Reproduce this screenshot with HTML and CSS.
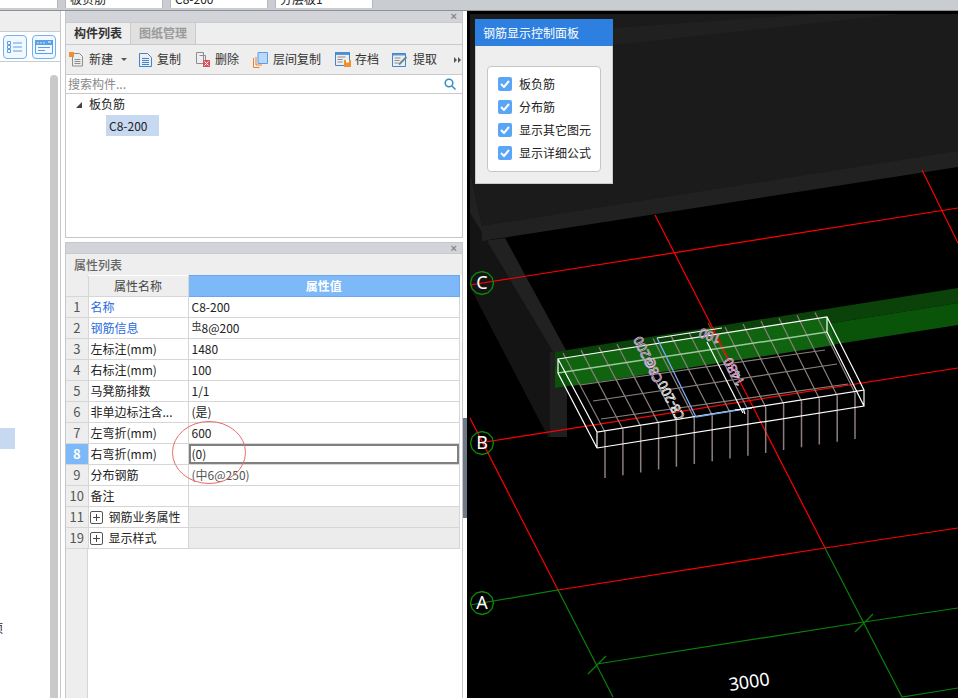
FILE: index.html
```html
<!DOCTYPE html>
<html lang="zh-CN">
<head>
<meta charset="utf-8">
<title>钢筋显示控制面板</title>
<link rel="stylesheet" href="styles.css">
</head>
<body>
<div class="app">
  <div class="topbar">
    <div class="field field-first"></div>
    <div class="field"><span>板负筋</span></div>
    <div class="field"><span>C8-200</span></div>
    <div class="field"><span>分层板1</span></div>
  </div>
  <div class="main">
    <aside class="left">
      <div class="left-head"></div>
      <div class="left-tools">
        <button class="view-btn"><svg width="16" height="14" viewBox="0 0 16 14"><path class="ic-blue" d="M0.5 1.5h3v3h-3zM0.5 5.5h3v3h-3zM0.5 9.5h3v3h-3z"/><path class="ic-blue" d="M6 3h9M6 7h9M6 11h9"/></svg></button>
        <button class="view-btn"><svg width="18" height="14" viewBox="0 0 18 14"><path class="ic-fill" d="M0 0h18v5H0z"/><path class="ic-blue" d="M.5.5h17v13H.5zM3 7.5h12M3 10.500h7"/><path class="ic-white" d="M3 2v1.500M6 2v1.500M9 2v1.500M13 2h3"/></svg></button>
      </div>
      <div class="left-body">
        <div class="left-list">
          <div class="left-sel"></div>
          <div class="left-clip"><span>项</span></div>
        </div>
        <div class="left-scroll"></div>
      </div>
    </aside>
    <section class="center">
      <div class="dock-top">
        <div class="dock-bar"><span class="dock-x">×</span></div>
        <div class="tabs">
          <div class="tab tab-on">构件列表</div>
          <div class="tab tab-off">图纸管理</div>
        </div>
        <div class="tools">
          <div class="tool tool-new">
            <svg width="15" height="15" viewBox="0 0 15 15"><path class="ic-doc" d="M3.500 1.500h7l3 3v9.500h-10z"/><path class="ic-doc" d="M5.500 7.500h6M5.500 9.500h6M5.500 11.500h6"/><path class="ic-orange" d="M0 0h5v5H0z"/></svg>
            <span>新建</span><i class="caret"></i>
          </div>
          <div class="tool tool-copy">
            <svg width="13" height="15" viewBox="0 0 13 15"><path class="ic-blue2" d="M.5 1.500h8l4 4v9h-12z"/><path class="ic-blue2" d="M3 6.500h7M3 8.500h7M3 10.500h7M3 12.500h7"/></svg>
            <span>复制</span>
          </div>
          <div class="tool tool-del">
            <svg width="14" height="15" viewBox="0 0 14 15"><path class="ic-doc" d="M.5.500h7v11h-7z"/><path class="ic-doc" d="M3.500 3.500h6v9"/><path class="ic-red" d="M7 8h7v7H7z"/><path class="ic-white" d="M8.500 9.500l4 4M12.500 9.500l-4 4"/></svg>
            <span>删除</span>
          </div>
          <div class="tool tool-floor">
            <svg width="15" height="16" viewBox="0 0 15 16"><path class="ic-orange-line" d="M.5 6v9.500h6M3 5v8h6"/><path class="ic-sky" d="M5 .500h9.500v11H5z"/></svg>
            <span>层间复制</span>
          </div>
          <div class="tool tool-save">
            <svg width="16" height="15" viewBox="0 0 16 15"><path class="ic-fill2" d="M0 0h15v3H0z"/><path class="ic-blue2" d="M.5 1h14v12.500H.5z"/><path class="ic-doc" d="M2.500 5h8M2.500 7.500h5M2.500 10h5"/><path class="ic-orange" d="M9 8h7v7H9z"/><path class="ic-whitefill" d="M11 8h3v2.500h-3z"/></svg>
            <span>存档</span>
          </div>
          <div class="tool tool-take">
            <svg width="16" height="15" viewBox="0 0 16 15"><path class="ic-fill2" d="M0 1h13v2.500H0z"/><path class="ic-blue2" d="M.5 1.500h13v13H.5z"/><path class="ic-doc" d="M2.500 6h6M2.500 8.500h5M2.500 11h4"/><path class="ic-pen" d="M7 12.500L14.500 5"/></svg>
            <span>提取</span>
          </div>
          <div class="tool-more"><i></i><i></i></div>
        </div>
        <div class="search">
          <span>搜索构件...</span>
          <svg width="12" height="12" viewBox="0 0 12 12"><circle class="ic-search" cx="5" cy="5" r="3.800"/><path class="ic-search" d="M8 8l3.500 3.500"/></svg>
        </div>
        <div class="tree">
          <div class="tree-root"><i class="tree-arrow"></i><span>板负筋</span></div>
          <div class="tree-leaf">C8-200</div>
        </div>
      </div>
      <div class="dock-gap"></div>
      <div class="dock-bottom">
        <div class="dock-bar"><span class="dock-x">×</span></div>
        <div class="prop-title">属性列表</div>
        <div class="prop-wrap">
          <table class="prop">
            <colgroup><col class="c-idx"><col class="c-name"><col class="c-val"></colgroup>
            <thead>
              <tr><th class="idx"></th><th class="name-head">属性名称</th><th class="val-head">属性值</th></tr>
            </thead>
            <tbody>
              <tr><td class="idx">1</td><td class="blue">名称</td><td>C8-200</td></tr>
              <tr><td class="idx">2</td><td class="blue">钢筋信息</td><td><span class="rebar">虫</span>8@200</td></tr>
              <tr><td class="idx">3</td><td>左标注(mm)</td><td>1480</td></tr>
              <tr><td class="idx">4</td><td>右标注(mm)</td><td>100</td></tr>
              <tr><td class="idx">5</td><td>马凳筋排数</td><td>1/1</td></tr>
              <tr><td class="idx">6</td><td>非单边标注含...</td><td>(是)</td></tr>
              <tr><td class="idx">7</td><td>左弯折(mm)</td><td>600</td></tr>
              <tr><td class="idx idx-on">8</td><td>右弯折(mm)</td><td class="val-on">(0)</td></tr>
              <tr><td class="idx">9</td><td>分布钢筋</td><td class="dim">(中6@250)</td></tr>
              <tr><td class="idx">10</td><td>备注</td><td></td></tr>
              <tr><td class="idx">11</td><td class="group"><i class="plus"></i>钢筋业务属性</td><td class="shade"></td></tr>
              <tr><td class="idx">19</td><td class="group"><i class="plus"></i>显示样式</td><td class="shade"></td></tr>
            </tbody>
          </table>
        </div>
      </div>
      <svg class="markup" width="76" height="65" viewBox="0 0 76 65"><ellipse cx="38" cy="32.500" rx="36.500" ry="31"/></svg>
    </section>
    <div class="splitter"><div class="split-grip"></div></div>
    <section class="viewport">
      <svg class="scene" width="491" height="687" viewBox="467 11 491 687">
        <path class="s-top" d="M470 14H958V152L482 227 470 170z"/>
        <path class="s-band2" d="M613 28L815 14H900L613 45z"/>
        <path class="s-wall" d="M470 213L553 352H550V437H548L470 287z"/>
        <path class="s-band" d="M482 226L958 151V167L482 241z"/>
        <path class="s-band" d="M470 170L482 226 482 241 505 238 567 352H553L470 213z"/>
        <path class="s-col" d="M550 352H567V437H550z"/>

        <path class="b-up" d="M555 352L958 288V303L555 367z"/>
        <path class="b-low" d="M555 367L958 303V325L555 388z"/>
        <path class="b-in" d="M558 359L827 317 835 345 572 386z"/>

        <path class="red" d="M470 285L958 208M655 215L825 548M922 170L958 243M470 418L558 590M485 442L958 368M558 590L825 548 958 528"/>
        <path class="brown" d="M708 323L728 360"/>
        <path class="green" d="M470 605L558 590 613 697M825 548L902 697 958 688M597 664L864 622 958 608M588 674L606 656M855 632L873 614"/>

        <path class="bar" d="M605 432V478M622.900 429.200V475.200M640.700 426.400V472.400M658.600 423.600V469.600M676.400 420.800V466.800M694.300 418.100V464.100M712.200 415.300V461.300M730 412.500V458.500M747.900 409.700V455.700M765.700 406.900V452.900M783.600 404.100V450.100M801.500 401.300V447.300M819.300 398.500V444.500M837.200 395.700V441.700M855 393V439"/>
        <path class="bar thin" d="M605 432L563 353M622.900 429.200L581 350.100M640.700 426.400L599 347.200M658.600 423.600L617 344.300M676.400 420.800L635 341.400M694.300 418.100L653 338.500M712.200 415.300L671 335.600M730 412.500L689 332.700M747.900 409.700L707 329.800M765.700 406.900L725 326.900M783.600 404.100L743 324M801.500 401.300L761 321.100M819.300 398.500L779 318.200M837.200 395.700L797 315.300M855 393L815 312.400"/>
        <path class="bar thin" d="M580 385L825 350M593 401L837 364M601 419L848 384"/>
        <path class="pale" d="M558 373L827 332"/>
        <path class="wire" d="M558 359L827 317 864 390 597 432zM558 359V373L597 448V432M597 448L864 406V390M827 317V332L864 406"/>
        <path class="anno-blue" d="M657 338L696 417 750 408"/>
        <path class="anno-white" d="M657 338L722 328M707 342L743 413M735 410L752 408M743 408L745 414"/>
        <path class="anno-cyan" d="M736 368L740 376"/>

        <g class="dim-text">
          <text class="t-white" transform="translate(685 417) rotate(-118)">C8-200</text>
          <text class="t-pink" transform="translate(663 380) rotate(-116)">C8@200</text>
          <text class="t-pink" transform="translate(745 383) rotate(-118)">1480</text>
          <text class="t-pink" transform="translate(722 336) rotate(-158)">100</text>
        </g>

        <polygon class="bubble" points="493.500,283 492,288.750 487.750,293 482,294.500 476.250,293 472,288.750 470.500,283 472,277.250 476.250,273 482,271.500 487.750,273 492,277.250"/>
        <polygon class="bubble" points="493.500,443 492,448.750 487.750,453 482,454.500 476.250,453 472,448.750 470.500,443 472,437.250 476.250,433 482,431.500 487.750,433 492,437.250"/>
        <polygon class="bubble" points="493.500,603 492,608.750 487.750,613 482,614.500 476.250,613 472,608.750 470.500,603 472,597.250 476.250,593 482,591.500 487.750,593 492,597.250"/>
        <text class="axis" x="482" y="289">C</text>
        <text class="axis" x="482" y="449">B</text>
        <text class="axis" x="482" y="609">A</text>
        <text class="dim3000" transform="translate(750 688) rotate(-8.500)">3000</text>
      </svg>
      <div class="ctrl">
        <div class="ctrl-head">钢筋显示控制面板</div>
        <div class="ctrl-body">
          <div class="ctrl-box">
            <div class="chk"><span class="box"><svg width="10" height="8" viewBox="0 0 10 8"><path d="M1 4l3 3 5-6"/></svg></span>板负筋</div>
            <div class="chk"><span class="box"><svg width="10" height="8" viewBox="0 0 10 8"><path d="M1 4l3 3 5-6"/></svg></span>分布筋</div>
            <div class="chk"><span class="box"><svg width="10" height="8" viewBox="0 0 10 8"><path d="M1 4l3 3 5-6"/></svg></span>显示其它图元</div>
            <div class="chk"><span class="box"><svg width="10" height="8" viewBox="0 0 10 8"><path d="M1 4l3 3 5-6"/></svg></span>显示详细公式</div>
          </div>
        </div>
      </div>
    </section>
  </div>
</div>
</body>
</html>
```
FILE: styles.css
```css
* { box-sizing: border-box; }
html, body { margin: 0; padding: 0; background: #fff; }
body { font: 12px/1.2 "Noto Sans CJK SC", "Noto Sans", sans-serif; color: #222; overflow: hidden; }
.app { width: 958px; height: 698px; display: flex; flex-direction: column; overflow: hidden; }

.topbar { height: 11px; flex: none; display: flex; gap: 7px; background: #c9ccd0; border-bottom: 1px solid #8e9195; overflow: hidden; }
.field { width: 98px; height: 8px; background: #fff; border-right: 1px solid #b5b8bc; border-left: 1px solid #b5b8bc; overflow: hidden; padding-left: 4px; }
.field span { display: block; font-size: 12px; line-height: 16px; margin-top: -9px; }
.field-first { width: 58px; border-left: 0; }

.main { flex: 1; min-height: 0; display: flex; }

.left { width: 61px; flex: none; display: flex; flex-direction: column; border-right: 1px solid #c8c8cc; }
.left-head { height: 21px; background: #eee; border-bottom: 1px solid #cbcbcb; }
.left-tools { height: 30px; display: flex; gap: 5px; padding: 3px 0 0 3px; border-bottom: 1px solid #cbcbcb; background: #fff; }
.view-btn { width: 24px; height: 24px; padding: 0; display: flex; align-items: center; justify-content: center; background: #f2f8ff; border: 1px solid #6fb1f6; border-radius: 4px; }
.left-body { flex: 1; display: flex; position: relative; }
.left-list { width: 50px; }
.left-sel { width: 15px; height: 21px; margin-top: 366px; background: #c7d9f0; }
.left-clip { width: 4px; overflow: hidden; margin-top: 172px; }
.left-clip span { display: block; margin-left: -9px; width: 14px; color: #223; }
.left-scroll { width: 8px; margin-top: 13px; background: #c9c9c9; border-radius: 4px 4px 0 0; }

.center { width: 402px; flex: none; margin-left: 4px; position: relative; display: flex; flex-direction: column; padding-right: 4px; }
.dock-top { height: 227px; flex: none; display: flex; flex-direction: column; border: 1px solid #c5c7cc; border-top: 0; }
.dock-gap { height: 4px; flex: none; }
.dock-bottom { flex: 1; min-height: 0; display: flex; flex-direction: column; border: 1px solid #c5c7cc; border-bottom: 0; }
.dock-bar { height: 11px; flex: none; background: #d2d4d9; display: flex; justify-content: flex-end; align-items: center; padding-right: 5px; }
.dock-bottom .dock-bar { height: 10px; }
.dock-x { font: bold 11px/11px "Liberation Sans", sans-serif; color: #85878c; }

.tabs { height: 23px; flex: none; display: flex; background: #eee; border-top: 1px solid #c8cacd; border-bottom: 1px solid #c8cacd; }
.tab { width: 65px; display: flex; align-items: center; justify-content: center; font-weight: 700; font-size: 12px; }
.tab-on { color: #333; border-right: 1px solid #c8cacd; }
.tab-off { color: #9a9a9a; background: #e0e0e0; border-right: 1px solid #c8cacd; }

.tools { height: 30px; flex: none; display: flex; align-items: center; background: #eee; color: #333; border-bottom: 1px solid #c8cacd; padding-left: 3px; white-space: nowrap; }
.tool { display: flex; align-items: center; gap: 5px; flex: none; }
.tool svg { flex: none; }
.tool-copy { margin-left: 12px; }
.tool-del { margin-left: 15px; }
.tool-floor { margin-left: 14px; }
.tool-save { margin-left: 14px; gap: 4px; }
.tool-take { margin-left: 13px; gap: 5px; }
.caret { width: 0; height: 0; margin-left: 3px; border: 3px solid transparent; border-top: 3px solid #555; border-bottom: 0; }
.tool-more { margin-left: 17px; display: flex; gap: 1px; flex: none; }
.tool-more i { width: 0; height: 0; border: 3px solid transparent; border-left: 3px solid #555; border-right: 0; }

.search { height: 19px; flex: none; display: flex; justify-content: space-between; align-items: center; padding: 0 6px 0 2px; border-bottom: 1px solid #c8cacd; color: #888; }
.tree { flex: 1; }
.tree-root { height: 21px; display: flex; align-items: center; padding-left: 10px; }
.tree-arrow { width: 0; height: 0; margin-right: 7px; border-left: 6px solid transparent; border-bottom: 6px solid #444; }
.tree-leaf { width: 53px; height: 21px; margin-left: 40px; padding-left: 3px; line-height: 21px; background: #c7d9f0; }

.prop-title { height: 22px; flex: none; background: #eee; color: #666; font-weight: 500; line-height: 21px; padding-left: 8px; border-top: 1px solid #c8cacd; }
.prop-wrap { flex: 1; min-height: 0; background: linear-gradient(to right, #eee 21px, #d6d6d6 21px, #d6d6d6 22px, #fff 22px); }
.prop { width: 394px; table-layout: fixed; border-collapse: collapse; }
.c-idx { width: 22px; }
.c-name { width: 100px; }
.prop th, .prop td { height: 21px; padding: 0 0 0 3px; border: 1px solid #d6d6d6; border-left: 0; border-top: 0; font-size: 12px; font-weight: 400; text-align: left; white-space: nowrap; overflow: hidden; }
.prop td:nth-child(2) { padding-left: 2px; }
.prop thead th { height: 21px; background: #eee; text-align: center; padding: 0; color: #444; }
.prop .val-head { background: #7db8f8; color: #fff; font-weight: 700; border: 1px solid #6aa8ea; }
.prop .idx { background: #eee; color: #555; text-align: center; padding: 0; font-size: 13px; }
.prop .idx-on { background: #7db8f8; color: #fff; font-weight: 700; }
.blue { color: #2a6be0; }
.dim { color: #555; }
.rebar { font-size: 10px; position: relative; top: -3px; color: #333; }
.val-on { box-shadow: inset 0 0 0 2px #808080; }
.prop td.group { padding-left: 1px; }
.plus { display: inline-block; vertical-align: -2px; width: 13px; height: 13px; margin-right: 6px; border: 1px solid #555; border-radius: 2px; background: linear-gradient(#444, #444) center / 7px 1px no-repeat, linear-gradient(#444, #444) center / 1px 7px no-repeat; }
.shade { background: #ececec; }

.markup { position: absolute; left: 106px; top: 409px; }
.markup ellipse { fill: none; stroke: #e86a6a; stroke-width: 1; }

.splitter { width: 0; position: relative; }
.split-grip { position: absolute; left: -4px; top: 407px; width: 4px; height: 100px; background: #6f7a85; }

.viewport { flex: 1; position: relative; background: #000; overflow: hidden; }
.scene { display: block; }
.s-top { fill: #1b1b1b; }
.s-band2 { fill: #202020; }
.s-wall { fill: #141414; }
.s-band { fill: #212121; }
.s-col { fill: #1f1f1f; }
.b-up { fill: #0a420a; }
.b-low { fill: #0a540a; }
.b-in { fill: #106410; }
.red, .green, .bar, .pale, .wire, .anno-blue, .anno-white, .anno-cyan, .brown { fill: none; }
.red { stroke: #f00; stroke-width: 1.200; }
.brown { stroke: #7a4a10; stroke-width: 1.300; }
.green { stroke: #0a800a; stroke-width: 1.200; }
.bar { stroke: #8a7f7b; stroke-width: 1.500; }
.thin { stroke-width: 1.200; }
.pale { stroke: #9cc89c; stroke-width: 1.500; }
.wire { stroke: #fff; stroke-width: 1.200; }
.anno-blue { stroke: #7aa8f0; stroke-width: 1.300; }
.anno-white { stroke: #fff; stroke-width: 1.200; }
.anno-cyan { stroke: #3fe0e0; stroke-width: 1.200; }
.dim-text text { font: 13px "Noto Sans", sans-serif; fill: #000; stroke-width: .7; }
.t-white { stroke: #fff; }
.t-pink { stroke: #eec6f0; }
.bubble { fill: none; stroke: #0a8a0a; stroke-width: 1.300; }
.axis { font: 18px "Noto Sans", sans-serif; fill: #fff; text-anchor: middle; }
.dim3000 { font: 18px "Noto Sans", sans-serif; fill: #fff; text-anchor: middle; }

.ctrl { position: absolute; left: 8px; top: 8px; width: 138px; height: 165px; display: flex; flex-direction: column; }
.ctrl-head { height: 27px; flex: none; background: #2e80e0; color: #fff; line-height: 27px; padding-left: 8px; }
.ctrl-body { flex: 1; background: #eee; border: 1px solid #c8cacd; border-top: 0; padding: 20px 11px 11px; }
.ctrl-box { height: 106px; background: #fff; border: 1px solid #c6c6c6; border-radius: 4px; padding: 10px 0 0 10px; display: flex; flex-direction: column; gap: 9px; }
.chk { display: flex; align-items: center; gap: 7px; height: 14px; color: #222; white-space: nowrap; }
.box { width: 14px; height: 14px; flex: none; display: flex; align-items: center; justify-content: center; background: #5aa5f5; border-radius: 2px; }
.box path { fill: none; stroke: #fff; stroke-width: 2; }

.ic-blue { fill: none; stroke: #5a9ee8; stroke-width: 1; }
.ic-fill { fill: #5a9ee8; }
.ic-white { fill: none; stroke: #fff; stroke-width: 1; }
.ic-whitefill { fill: #fff; }
.ic-doc { fill: none; stroke: #8d8d8d; stroke-width: 1; }
.ic-orange { fill: #f0902c; }
.ic-orange-line { fill: none; stroke: #f0802c; stroke-width: 1; }
.ic-blue2 { fill: none; stroke: #3f86cf; stroke-width: 1; }
.ic-fill2 { fill: #5c96d4; }
.ic-red { fill: #d8505a; }
.ic-sky { fill: #b9d8fb; stroke: #5a9ee8; stroke-width: 1; }
.ic-pen { fill: none; stroke: #6a8a8a; stroke-width: 2; }
.ic-search { fill: none; stroke: #2f8fc4; stroke-width: 1.500; }
```
